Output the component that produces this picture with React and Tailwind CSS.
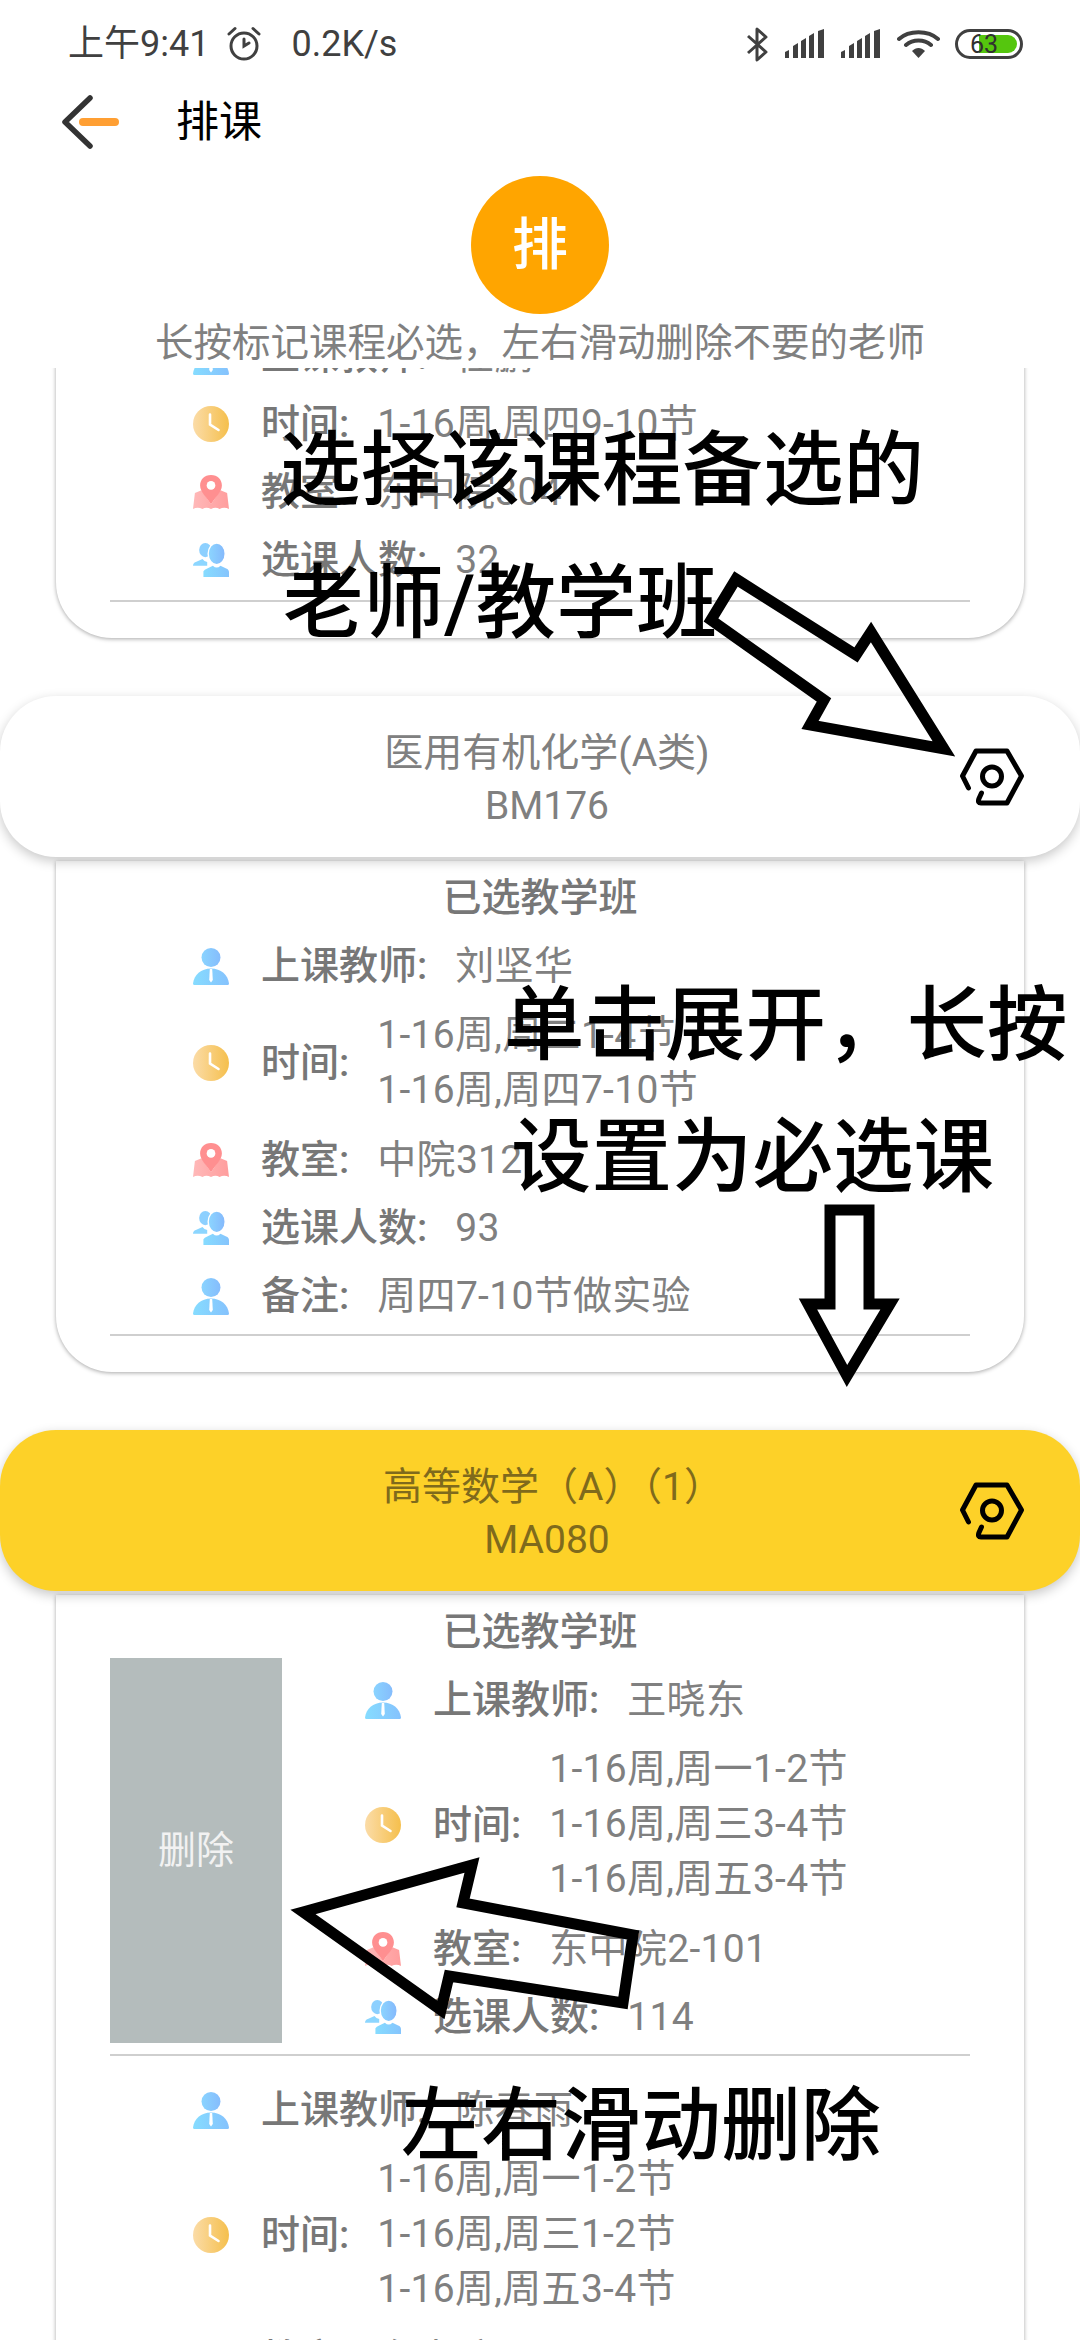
const bodyFont = { fontFamily: 'Roboto, "Noto Sans CJK SC", sans-serif' };

function UserIcon() {
  return (
    <svg width="36" height="37" viewBox="0 0 36 37">
      <defs>
        <linearGradient id="userHead" x1="0" y1="0" x2="1" y2="0"><stop offset="0" stopColor="#8ad4ff" /><stop offset="1" stopColor="#85bcfc" /></linearGradient>
        <linearGradient id="userBody" x1="0" y1="0" x2="1" y2="0"><stop offset="0" stopColor="#86dcff" /><stop offset="1" stopColor="#85c2fd" /></linearGradient>
      </defs>
      <circle cx="18" cy="9.5" r="9.5" fill="url(#userHead)" />
      <path d="M0 35.5C1 27 8 20.5 18 20.5S35 27 36 35.5Q36 37 34.5 37H1.5Q0 37 0 35.5Z" fill="url(#userBody)" />
      <path d="M16.8 21H19.2L19.8 32L18 34.5L16.2 32Z" fill="#fff" />
    </svg>
  );
}

function ClockIcon() {
  return (
    <svg width="36" height="36" viewBox="0 0 36 36">
      <defs>
        <linearGradient id="clockFill" x1="0" y1="0" x2="1" y2="0"><stop offset="0" stopColor="#fbdca8" /><stop offset="1" stopColor="#f5bf4c" /></linearGradient>
      </defs>
      <circle cx="18" cy="18" r="18" fill="url(#clockFill)" />
      <path d="M17 8.5V18.5L25.5 24" fill="none" stroke="#fff" strokeWidth="2.6" strokeLinecap="round" />
    </svg>
  );
}

function PinIcon() {
  return (
    <svg width="38" height="37" viewBox="0 0 38 37">
      <defs>
        <linearGradient id="mapFill" x1="0" y1="0" x2="1" y2="0"><stop offset="0" stopColor="#ffb9b9" /><stop offset="1" stopColor="#ff9d9d" /></linearGradient>
      </defs>
      <path d="M9 16L2 19L0 36Q5 33 10 36Q14 33 19 36Q24 33 28 36Q33 33 38 36L36 19L29 16L19 31Z" fill="url(#mapFill)" />
      <path d="M19 0C12 0 7.5 5 7.5 11C7.5 18 15 24 19 31C23 24 30.5 18 30.5 11C30.5 5 26 0 19 0Z" fill="#ff8f90" />
      <circle cx="19" cy="11" r="4.6" fill="#fff" />
    </svg>
  );
}

function GroupIcon() {
  return (
    <svg width="38" height="36" viewBox="0 0 38 36">
      <defs>
        <linearGradient id="groupHead" x1="0" y1="0" x2="1" y2="0"><stop offset="0" stopColor="#8cd6ff" /><stop offset="1" stopColor="#84b8fc" /></linearGradient>
        <linearGradient id="groupBody" x1="0" y1="0" x2="1" y2="0"><stop offset="0" stopColor="#86dcff" /><stop offset="1" stopColor="#85c4fd" /></linearGradient>
      </defs>
      <ellipse cx="13" cy="7.5" rx="6.5" ry="7.5" fill="#8cd0ff" />
      <path d="M0 24Q0 21 3 20L10 17Q12 20 15 20V24Z" fill="#8cd6ff" />
      <ellipse cx="25" cy="11.5" rx="9" ry="11.5" fill="url(#groupHead)" stroke="#fff" strokeWidth="1.5" />
      <path d="M11 36V30Q12 28 15 27L21 24Q25 28 29 24L35 27Q38 28 38 31V36Z" fill="url(#groupBody)" />
    </svg>
  );
}

function NutIcon() {
  return (
    <svg width="64" height="58" viewBox="0 0 64 58" fill="none" stroke="#000" strokeWidth="5" strokeLinecap="round" strokeLinejoin="round">
      <path d="M8.5 40L2.5 28L16 3H47L61.5 28L47 55H21Q17.5 55 18.8 51L21.5 45" />
      <circle cx="32" cy="28.5" r="9.5" />
    </svg>
  );
}

function Row({ icon, label, children }) {
  return (
    <div className="flex items-center mt-4 min-h-[52px]">
      <div className="w-[36px] flex justify-center shrink-0">{icon}</div>
      <div className="ml-[32px] font-medium text-[#777777] whitespace-nowrap">{label}</div>
      <div className="ml-[28px] text-[#808080] tracking-[0.3px] whitespace-nowrap">{children}</div>
    </div>
  );
}

function Group({ teacher, times, room, count, note }) {
  return (
    <div className="pl-[83px] text-[39px] leading-[52px]">
      <Row icon={<UserIcon />} label="上课教师:">{teacher}</Row>
      <Row icon={<ClockIcon />} label="时间:">
        {times.map((t) => <div key={t} className={times.length > 1 ? 'leading-[55px]' : 'leading-[52px]'}>{t}</div>)}
      </Row>
      <Row icon={<PinIcon />} label="教室:">{room}</Row>
      <Row icon={<GroupIcon />} label="选课人数:">{count}</Row>
      {note && <Row icon={<UserIcon />} label="备注:">{note}</Row>}
    </div>
  );
}

function CourseHeader({ name, code, yellow }) {
  return (
    <div className={`relative z-10 h-[161px] rounded-[56px] shadow-[0_4px_12px_rgba(0,0,0,0.22)] pt-[31px] pl-[14px] text-center text-[39px] leading-[53px] ${yellow ? 'bg-[#fdd128] text-[#7f6a1c]' : 'bg-white text-[#808080]'}`}>
      <div className={yellow ? 'pl-[12px]' : ''}>{name}</div>
      <div>{code}</div>
      <div className="absolute right-[56px] top-[52px]"><NutIcon /></div>
    </div>
  );
}

function Card({ children, className }) {
  return (
    <div className={`mx-[56px] px-[54px] pb-9 bg-white rounded-b-[56px] shadow-[0_1px_4px_rgba(0,0,0,0.35)] ${className}`}>
      {children}
    </div>
  );
}

function CardTitle() {
  return <div className="pt-[12px] h-[63px] text-center text-[39px] leading-[50px] font-medium text-[#777777]">已选教学班</div>;
}

function StatusBar() {
  return (
    <div className="h-[88px] flex items-center pl-[68px] pr-[57px] text-[#404040] text-[36px]">
      <span>上午9:41</span>
      <svg className="ml-[17px]" width="36" height="36" viewBox="0 0 36 36" fill="none" stroke="#404040" strokeWidth="3" strokeLinecap="round">
        <circle cx="18" cy="20" r="13" />
        <path d="M18 13V20L23 17M3 8L9 2.5M33 8L27 2.5" />
      </svg>
      <span className="ml-[29px]">0.2K/s</span>
      <div className="ml-auto flex items-center">
        <svg width="22" height="35" viewBox="0 0 22 35" fill="none" stroke="#404040" strokeWidth="3" strokeLinejoin="round">
          <path d="M1 9L19 25L10 33V2L19 10L1 26" />
        </svg>
        <svg className="ml-[16px]" width="40" height="30" viewBox="0 0 40 30" fill="#404040">
          <path d="M0 23L4 21V29H0ZM8 17L13 14V29H8ZM16 12L21 9V29H16ZM24 7L29 4V29H24ZM33 2L39 0V29H33Z" />
        </svg>
        <svg className="ml-[16px]" width="40" height="30" viewBox="0 0 40 30" fill="#404040">
          <path d="M0 23L4 21V29H0ZM8 17L13 14V29H8ZM16 12L21 9V29H16ZM24 7L29 4V29H24ZM33 2L39 0V29H33Z" />
        </svg>
        <svg className="ml-[16px]" width="43" height="30" viewBox="0 0 43 30" fill="none" stroke="#404040" strokeWidth="4" strokeLinecap="round">
          <path d="M2 10C12 1 31 1 41 10M9 16C16 10 27 10 34 16" />
          <path d="M15 22C19 18 24 18 28 22L21.5 29Z" fill="#404040" stroke="none" />
        </svg>
        <div className="relative ml-[15px] w-[68px] h-[30px] rounded-full border-[3px] border-[#404040]">
          <div className="absolute left-[21px] right-[3px] top-[3px] bottom-[3px] rounded-r-full bg-[#55c60e]" />
          <div className="absolute inset-0 flex items-center justify-center pr-[10px] text-[25px] leading-none text-[#303030]">63</div>
        </div>
      </div>
    </div>
  );
}

export default function App() {
  return (
    <div className="relative h-[2340px] flex flex-col overflow-hidden bg-white" style={bodyFont}>
      <StatusBar />

      {/* toolbar */}
      <div className="h-[68px] flex items-center pl-[62px] shrink-0">
        <svg width="58" height="54" viewBox="0 0 58 54" fill="none" strokeLinecap="round">
          <path d="M28 3L3 27L28 51" stroke="#333333" strokeWidth="5.5" strokeLinejoin="round" />
          <path d="M21 27H53" stroke="#ff9f33" strokeWidth="8" />
        </svg>
        <span className="ml-[56px] text-[43px] text-black">排课</span>
      </div>

      <div className="shrink-0 mt-5 mx-auto w-[138px] h-[138px] rounded-full bg-[#ffa500] flex items-center justify-center text-white text-[56px] font-medium">排</div>
      <div className="shrink-0 h-[54px] pt-1 text-center text-[38.5px] leading-[50px] text-[#808080] whitespace-nowrap">{'长按标记课程必选\uFF0C左右滑动删除不要的老师'}</div>

      {/* course list, already scrolled a little */}
      <div className="flex-1 min-h-0 overflow-hidden">
        <Card className="-mt-[54px] pt-0">
          <Group teacher="任鹏" times={['1-16周,周四9-10节']} room="东中院304" count="32" />
          <div className="mt-[14px] h-[2px] bg-[#cfcfcf]" />
        </Card>

        <div className="mt-[58px]">
          <CourseHeader name="医用有机化学(A类)" code="BM176" />
        </div>
        <Card className="mt-1">
          <CardTitle />
          <Group teacher="刘坚华" times={['1-16周,周二1-4节', '1-16周,周四7-10节']} room="中院312" count="93" note="周四7-10节做实验" />
          <div className="mt-[12px] h-[2px] bg-[#cfcfcf]" />
        </Card>

        <div className="mt-[58px]">
          <CourseHeader name={'高等数学\uFF08A\uFF09\uFF081\uFF09'} code="MA080" yellow />
        </div>
        <Card className="mt-1">
          <CardTitle />
          <div className="flex">
            <div className="w-[172px] shrink-0 bg-[#b4bcbc] flex items-center justify-center text-[38px] text-[#f2f2f2]">删除</div>
            <Group teacher="王晓东" times={['1-16周,周一1-2节', '1-16周,周三3-4节', '1-16周,周五3-4节']} room="东中院2-101" count="114" />
          </div>
          <div className="mt-[11px] mb-[28px] h-[2px] bg-[#cfcfcf]" />
          <Group teacher="陈春雨" times={['1-16周,周一1-2节', '1-16周,周三1-2节', '1-16周,周五3-4节']} room="东中院2-101" count="114" />
        </Card>
      </div>

      {/* annotations drawn on top of the screenshot */}
      <svg className="absolute inset-0 z-20 pointer-events-none" width="1080" height="2340" viewBox="0 0 1080 2340" fill="none" stroke="#000" strokeWidth="11" strokeLinejoin="miter">
        <path d="M736 579L856 655L871 632L944 749L810 725L824 700L711 620Z" />
        <path d="M830 1210H869V1304H890L847 1376L808 1304H830Z" />
        <path d="M303 1912L472 1865L463 1903L633 1935L623 2003L449 1976L441 2010Z" />
      </svg>
      <div className="absolute z-20 left-[280px] top-[425px] text-[80.5px] leading-[92px] font-medium text-black whitespace-nowrap">选择该课程备选的</div>
      <div className="absolute z-20 left-[283px] top-[558px] text-[80.5px] leading-[92px] font-medium text-black whitespace-nowrap">老师/教学班</div>
      <div className="absolute z-20 left-[504px] top-[980px] text-[80.5px] leading-[92px] font-medium text-black whitespace-nowrap">{'单击展开\uFF0C长按'}</div>
      <div className="absolute z-20 left-[511px] top-[1112px] text-[80.5px] leading-[92px] font-medium text-black whitespace-nowrap">设置为必选课</div>
      <div className="absolute z-20 left-[401px] top-[2080px] text-[80px] leading-[92px] font-medium text-black whitespace-nowrap">左右滑动删除</div>
    </div>
  );
}
